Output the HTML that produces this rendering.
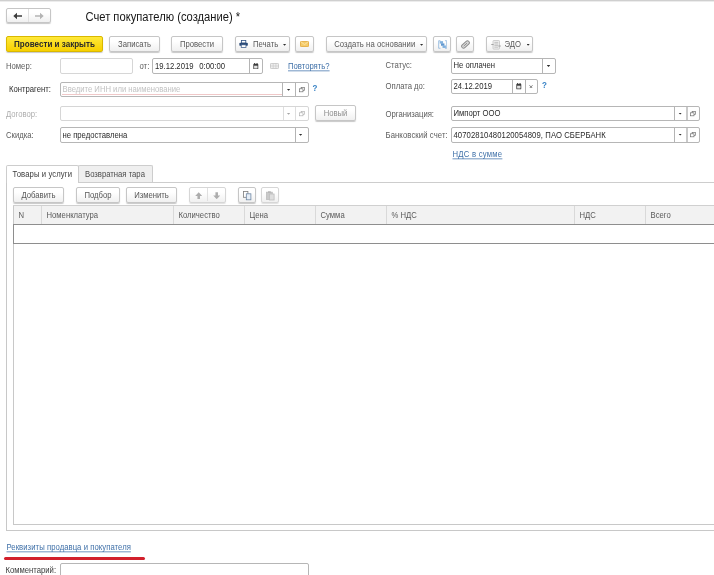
<!DOCTYPE html>
<html lang="ru"><head><meta charset="utf-8"><title>Счет покупателю (создание)</title>
<style>
*{box-sizing:border-box;margin:0;padding:0}
html,body{width:714px;height:575px;overflow:hidden;background:#fff}
body{position:relative;font-family:"Liberation Sans",sans-serif;font-size:7.7px;color:#444;line-height:1;will-change:transform}
.t,.lbl,.lnk,.q{transform:scaleY(1.09);transform-origin:0 50%}
.t{display:inline-block}
.a{position:absolute;white-space:pre}
.lbl{position:absolute;white-space:pre;color:#5c5c5c;line-height:10px}
.ctl{position:absolute;border:1px solid #b6b6b6;border-radius:2px;background:#fff;color:#2a2a2a;white-space:pre;padding-left:1.5px;line-height:13.6px;height:15px}
.ctl.lt{border-color:#d6d6d6}
.ctl i{position:absolute;top:0;bottom:0;width:1px;background:#b4b4b4}
.ctl.lt i{background:#dedede}
.ctl svg{position:absolute}
.btn{position:absolute;height:16px;border:1px solid #c6c6c6;border-radius:2px;background:linear-gradient(#ffffff 30%,#f0f0f0);box-shadow:0 1px 1px rgba(0,0,0,.22);color:#585858;text-align:center;line-height:16.4px;white-space:pre}
.btn svg{position:absolute}
.lnk{position:absolute;white-space:pre;color:#3f70a8;text-decoration:underline;text-decoration-thickness:0.7px;text-underline-offset:0.6px;text-decoration-skip-ink:none;text-decoration-color:#7d9ec6;line-height:10px}
.q{position:absolute;color:#3a84c6;font-weight:bold;line-height:10px;font-size:8px}
.th{position:absolute;top:206px;height:18px;border-left:1px solid #d9d9d9;color:#5a5a5a;line-height:20px;padding-left:4.5px;white-space:pre}
.dd{position:absolute;width:3.2px;height:1.8px;background:#2e2e2e;clip-path:polygon(0 0,100% 0,50% 100%)}
.ctl .dd{width:3.8px;height:2px}
</style></head><body>
<div class="a" style="left:0;top:0;width:714px;height:1px;background:#cfcfcf"></div>
<div class="a" style="left:0;top:1px;width:714px;height:1px;background:#ececec"></div>

<!-- nav -->
<div class="btn" style="left:6px;top:8px;width:45px;height:15px"></div>
<div class="a" style="left:28px;top:9px;width:1px;height:13px;background:#e0e0e0"></div>
<svg class="a" style="left:13px;top:12px" width="10" height="8" viewBox="0 0 10 8"><path d="M0.3 4 L4 0.8 V3.2 H9 V4.8 H4 V7.2 Z" fill="#3c3c3c"/></svg>
<svg class="a" style="left:34px;top:12px" width="10" height="8" viewBox="0 0 10 8"><path d="M9.7 4 L6 0.8 V3.2 H1 V4.8 H6 V7.2 Z" fill="#b4b4b4"/></svg>
<div class="a" style="left:85.5px;top:11px;font-size:11.2px;color:#161616;line-height:13px;transform:scaleY(1.06);transform-origin:0 50%">Счет покупателю (создание) *</div>

<!-- toolbar -->
<div class="btn" style="left:6px;top:36px;width:97px;background:linear-gradient(#ffe93a,#f7d000);border-color:#d9b800;color:#2a2a2a;font-weight:bold;font-size:8.07px"><span class="t">Провести и закрыть</span></div>
<div class="btn" style="left:109px;top:36px;width:51px"><span class="t">Записать</span></div>
<div class="btn" style="left:171px;top:36px;width:52px"><span class="t">Провести</span></div>
<div class="btn" style="left:235px;top:36px;width:55px;text-align:left;padding-left:17px"><span class="t">Печать</span><span class="dd" style="left:47px;top:7px"></span>
<svg style="left:3.2px;top:3.2px" width="9.2" height="8" viewBox="0 0 10 9" preserveAspectRatio="none"><rect x="2.6" y="0.5" width="4.8" height="3" fill="#fff" stroke="#2f5283" stroke-width="0.9"/><rect x="0.4" y="3" width="9.2" height="3.6" rx="1" fill="#2b4b78"/><rect x="2.4" y="5.4" width="5.2" height="3" fill="#fff" stroke="#2f5283" stroke-width="0.8"/></svg></div>
<div class="btn" style="left:295px;top:36px;width:19px"><svg style="left:4px;top:4.2px" width="9" height="6" viewBox="0 0 10 7" preserveAspectRatio="none"><rect x="0.5" y="0.5" width="9" height="6" rx="0.8" fill="#f5cc6a" stroke="#e2a93a"/><path d="M1 1 L5 4.2 L9 1" fill="none" stroke="#fbe6ad" stroke-width="1"/></svg></div>
<div class="btn" style="left:326px;top:36px;width:101px;text-align:left;padding-left:7.2px"><span class="t" style="letter-spacing:0.07px">Создать на основании</span><span class="dd" style="left:93px;top:7px"></span></div>
<div class="btn" style="left:433px;top:36px;width:18px"><svg style="left:3.5px;top:3px" width="9.4" height="9" viewBox="0 0 10 10" preserveAspectRatio="none"><path d="M2.6 0.8 H0.7 V9.2 H2.6 M7.4 0.8 H9.3 V9.2 H7.4" fill="none" stroke="#8fb6dd" stroke-width="0.9"/><rect x="1.8" y="1.3" width="3.6" height="2.7" fill="#7fb0de"/><rect x="3.2" y="3.8" width="3.6" height="2.6" fill="#5f97cf"/><rect x="4.8" y="6.1" width="3.6" height="2.7" fill="#7fb0de"/></svg></div>
<div class="btn" style="left:456px;top:36px;width:18px"><svg style="left:4px;top:3px" width="9" height="9" viewBox="0 0 9 9"><g transform="rotate(48 4.5 4.5)"><rect x="2.6" y="0" width="3.8" height="9" rx="1.9" fill="#d9d9d9" stroke="#8e8e8e" stroke-width="1"/><path d="M4.5 7 V2.4" fill="none" stroke="#8e8e8e" stroke-width="0.9"/></g></svg></div>
<div class="btn" style="left:486px;top:36px;width:47px;text-align:left;padding-left:17.6px"><span class="t">ЭДО</span><span class="dd" style="left:39.5px;top:7px"></span>
<svg style="left:4px;top:3px" width="10" height="10" viewBox="0 0 10 10"><rect x="2" y="0.5" width="6.5" height="8.6" rx="0.8" fill="#efefef" stroke="#c4c4c4" stroke-width="0.8"/><path d="M3.4 2.4 H7.2 M3.4 4 H7.2 M3.4 5.6 H7.2 M3.4 7.2 H7.2" stroke="#b0b0b0" stroke-width="0.7"/><path d="M0.3 4.5 H2.6 M7.4 6 H9.8" stroke="#9a9a9a" stroke-width="0.9"/></svg></div>

<!-- row1 -->
<div class="lbl" style="left:6px;top:61.7px">Номер:</div>
<div class="ctl lt" style="left:60px;top:58px;width:73px;height:16px"></div>
<div class="lbl" style="left:139.5px;top:61.7px">от:</div>
<div class="ctl" style="left:152px;top:58px;width:111.4px;height:16px;line-height:15.4px;padding-left:2px"><span class="t" style="word-spacing:0.8px">19.12.2019  0:00:00</span><i style="left:96px"></i>
<svg style="left:100px;top:3.6px" width="5.6" height="6.6" viewBox="0 0 7 7" preserveAspectRatio="none"><rect x="0.4" y="0.9" width="6.2" height="5.8" rx="0.9" fill="#3c3c3c"/><rect x="1.4" y="2.9" width="4.2" height="2.9" fill="#f4f4f4"/><path d="M1.4 4.3 H5.6" stroke="#8a8a8a" stroke-width="0.4"/><path d="M1.9 0 V1.6 M5.1 0 V1.6" stroke="#3c3c3c" stroke-width="1"/></svg></div>
<svg class="a" style="left:270px;top:63px" width="9" height="6" viewBox="0 0 9 6"><rect x="0.4" y="0.4" width="8.2" height="5.2" rx="1" fill="#efefef" stroke="#bcbcbc" stroke-width="0.8"/><path d="M0.5 3 H8.5 M3.2 0.5 V5.5 M5.9 0.5 V5.5" stroke="#c6c6c6" stroke-width="0.6"/></svg>
<div class="lnk" style="left:288px;top:61.7px">Повторять?</div>
<div class="lbl" style="left:385.5px;top:61.2px">Статус:</div>
<div class="ctl" style="left:451px;top:58px;width:105px;height:16px;line-height:14.4px"><span class="t">Не оплачен</span><i style="left:90px"></i><span class="dd" style="left:94.6px;top:5.9px"></span></div>

<!-- row2 -->
<div class="lbl" style="left:9px;top:85.2px;color:#2e2e2e">Контрагент:</div>
<div class="ctl" style="left:60px;top:82px;width:249px;color:#c2c2c2"><span class="t">Введите ИНН или наименование</span><i style="left:221px"></i><i style="left:233.5px"></i><span class="dd" style="left:225.7px;top:5.8px"></span>
<b style="position:absolute;left:1px;top:11px;width:220px;height:1px;background:#f0c8c8"></b>
<svg style="left:238.3px;top:4.2px" width="6.2" height="5.4" viewBox="0 0 7 6"><rect x="2.4" y="0.4" width="4" height="3.4" fill="#fff" stroke="#6a6a6a" stroke-width="0.75"/><rect x="0.5" y="2" width="4" height="3.4" fill="#fff" stroke="#6a6a6a" stroke-width="0.75"/></svg></div>
<div class="q" style="left:312.5px;top:84.4px">?</div>
<div class="lbl" style="left:385.5px;top:81.7px">Оплата до:</div>
<div class="ctl" style="left:451px;top:79px;width:87.4px"><span class="t">24.12.2019</span><i style="left:60.2px"></i><i style="left:73px"></i>
<svg style="left:64px;top:3.4px" width="5.6" height="6.6" viewBox="0 0 7 7" preserveAspectRatio="none"><rect x="0.4" y="0.9" width="6.2" height="5.8" rx="0.9" fill="#3c3c3c"/><rect x="1.4" y="2.9" width="4.2" height="2.9" fill="#f4f4f4"/><path d="M1.4 4.3 H5.6" stroke="#8a8a8a" stroke-width="0.4"/><path d="M1.9 0 V1.6 M5.1 0 V1.6" stroke="#3c3c3c" stroke-width="1"/></svg>
<svg style="left:76.8px;top:4.8px" width="4" height="3.6" viewBox="0 0 4 4"><path d="M0.3 0.3 L3.7 3.7 M3.7 0.3 L0.3 3.7" stroke="#555" stroke-width="0.85"/></svg></div>
<div class="q" style="left:542px;top:80.6px">?</div>

<!-- row3 -->
<div class="lbl" style="left:6px;top:109.7px;color:#adadad">Договор:</div>
<div class="ctl lt" style="left:60px;top:106px;width:249px"><i style="left:222px"></i><i style="left:233.5px"></i><span class="dd" style="left:225.7px;top:5.8px;background:#a5a5a5"></span>
<svg style="left:238.3px;top:4.2px" width="6.2" height="5.4" viewBox="0 0 7 6"><rect x="2.4" y="0.4" width="4" height="3.4" fill="#fff" stroke="#aaa" stroke-width="0.7"/><rect x="0.5" y="2" width="4" height="3.4" fill="#fff" stroke="#aaa" stroke-width="0.7"/></svg></div>
<div class="btn" style="left:315px;top:105px;width:41px;color:#8e8e8e"><span class="t">Новый</span></div>
<div class="lbl" style="left:385.5px;top:109.7px">Организация:</div>
<div class="ctl" style="left:451px;top:106px;width:249px"><span class="t">Импорт ООО</span><i style="left:222px"></i><i style="left:234px;width:2px;background:#c9c9c9"></i><span class="dd" style="left:226.3px;top:5.6px"></span>
<svg style="left:238.3px;top:4.2px" width="6.2" height="5.4" viewBox="0 0 7 6"><rect x="2.4" y="0.4" width="4" height="3.4" fill="#fff" stroke="#6a6a6a" stroke-width="0.75"/><rect x="0.5" y="2" width="4" height="3.4" fill="#fff" stroke="#6a6a6a" stroke-width="0.75"/></svg></div>

<!-- row4 -->
<div class="lbl" style="left:6px;top:131.0px">Скидка:</div>
<div class="ctl" style="left:60px;top:127px;width:249px;height:16px;line-height:15px"><span class="t">не предоставлена</span><i style="left:233.5px"></i><span class="dd" style="left:237.7px;top:5.8px"></span></div>
<div class="lbl" style="left:385.5px;top:131.0px;letter-spacing:0.1px">Банковский счет:</div>
<div class="ctl" style="left:451px;top:127px;width:249px;height:16px;line-height:15px"><span class="t" style="letter-spacing:0.09px">40702810480120054809, ПАО СБЕРБАНК</span><i style="left:222px"></i><i style="left:234px;width:2px;background:#c9c9c9"></i><span class="dd" style="left:226.3px;top:5.6px"></span>
<svg style="left:238.3px;top:4.2px" width="6.2" height="5.4" viewBox="0 0 7 6"><rect x="2.4" y="0.4" width="4" height="3.4" fill="#fff" stroke="#6a6a6a" stroke-width="0.75"/><rect x="0.5" y="2" width="4" height="3.4" fill="#fff" stroke="#6a6a6a" stroke-width="0.75"/></svg></div>
<div class="lnk" style="left:452.5px;top:149.7px;letter-spacing:0.25px">НДС в сумме</div>

<!-- tabs -->
<div class="a" style="left:6px;top:182px;width:708px;height:1px;background:#cdcdcd"></div>
<div class="a" style="left:6px;top:165px;width:73px;height:18px;border:1px solid #cdcdcd;border-bottom:none;border-radius:2px 2px 0 0;background:#fff;color:#3c3c3c;line-height:17.4px;padding-left:5.5px"><span class="t" style="letter-spacing:0.1px">Товары и услуги</span></div>
<div class="a" style="left:78px;top:165px;width:74.5px;height:17px;border:1px solid #cdcdcd;border-bottom:none;border-radius:2px 2px 0 0;background:#efefef;color:#4c4c4c;line-height:17.4px;padding-left:6px"><span class="t">Возвратная тара</span></div>
<div class="a" style="left:6px;top:183px;width:1px;height:347px;background:#c8c8c8"></div>
<div class="a" style="left:6px;top:530px;width:708px;height:1px;background:#c8c8c8"></div>

<!-- table toolbar -->
<div class="btn" style="left:13px;top:187px;width:51px"><span class="t">Добавить</span></div>
<div class="btn" style="left:76px;top:187px;width:44px"><span class="t">Подбор</span></div>
<div class="btn" style="left:126px;top:187px;width:51px"><span class="t">Изменить</span></div>
<div class="btn" style="left:189px;top:187px;width:37px;border-color:#d6d6d6;box-shadow:0 1px 1px rgba(0,0,0,.12)"><b style="position:absolute;left:17px;top:0;width:1px;height:13px;background:#e0e0e0"></b>
<svg style="left:4.6px;top:3.6px" width="7.4" height="7.4" viewBox="0 0 7 7"><path d="M3.5 0.2 L6.8 3.7 H4.7 V6.8 H2.3 V3.7 H0.2 Z" fill="#adadad"/></svg>
<svg style="left:22.6px;top:3.6px" width="7.4" height="7.4" viewBox="0 0 7 7"><path d="M3.5 6.8 L6.8 3.3 H4.7 V0.2 H2.3 V3.3 H0.2 Z" fill="#adadad"/></svg></div>
<div class="btn" style="left:238px;top:187px;width:18px"><svg style="left:4px;top:2.5px" width="9" height="10" viewBox="0 0 9 10"><rect x="0.5" y="0.5" width="4.4" height="5.8" fill="#fff" stroke="#7c7c7c" stroke-width="0.8"/><rect x="3.3" y="2.8" width="4.6" height="6" fill="#e6eef7" stroke="#6f87a3" stroke-width="0.8"/></svg></div>
<div class="btn" style="left:261px;top:187px;width:18px;border-color:#d6d6d6;box-shadow:0 1px 1px rgba(0,0,0,.12)"><svg style="left:4px;top:2.5px" width="9" height="10" viewBox="0 0 9 10"><rect x="0.5" y="1.2" width="5.8" height="7.2" fill="#c9c9c9" stroke="#bcbcbc" stroke-width="0.8"/><rect x="2" y="0.3" width="2.8" height="1.5" fill="#b4b4b4"/><rect x="3.5" y="3" width="4.6" height="6" fill="#dedede" stroke="#bebebe" stroke-width="0.8"/></svg></div>

<!-- table -->
<div class="a" style="left:13px;top:205px;width:701px;height:20px;background:#f2f2f2;border-top:1px solid #d0d0d0;border-bottom:1px solid #9c9c9c"></div>
<div class="th" style="left:13px;width:28px;border-left-color:#c8c8c8"><span class="t">N</span></div>
<div class="th" style="left:41px;width:132px"><span class="t">Номенклатура</span></div>
<div class="th" style="left:173px;width:72px"><span class="t">Количество</span></div>
<div class="th" style="left:244px;width:71px"><span class="t">Цена</span></div>
<div class="th" style="left:315px;width:71px"><span class="t">Сумма</span></div>
<div class="th" style="left:386px;width:188px"><span class="t">% НДС</span></div>
<div class="th" style="left:574px;width:71px"><span class="t">НДС</span></div>
<div class="th" style="left:645px;width:69px"><span class="t">Всего</span></div>
<div class="a" style="left:13px;top:225px;width:1px;height:300px;background:#c8c8c8"></div>
<div class="a" style="left:13px;top:524px;width:701px;height:1px;background:#c8c8c8"></div>
<div class="a" style="left:13px;top:224px;width:703px;height:20px;border:1px solid #8e8e8e"></div>

<!-- bottom -->
<div class="lnk" style="left:6.5px;top:542.7px;letter-spacing:0.06px">Реквизиты продавца и покупателя</div>
<div class="a" style="left:4px;top:557px;width:141px;height:3px;background:#d2202c;border-radius:1.5px"></div>
<div class="lbl" style="left:5.5px;top:566.2px;color:#3c3c3c">Комментарий:</div>
<div class="ctl" style="left:60px;top:563px;width:249px;height:16px"></div>
</body></html>
